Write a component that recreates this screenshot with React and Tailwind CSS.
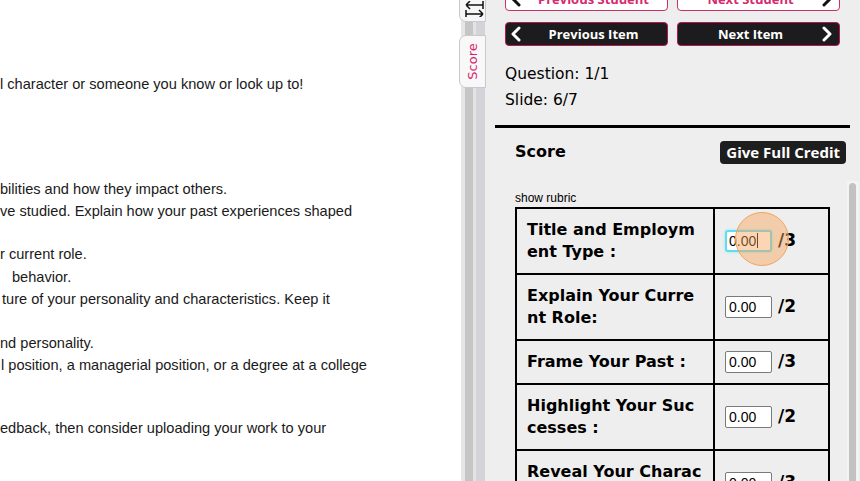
import React from 'react'

// Visible part of the assignment text (document is scrolled sideways)
const LEFT_LINES = [
  { text: 'l character or someone you know or look up to!', cls: 'mt-[73px]' },
  { text: 'bilities and how they impact others.', cls: 'mt-[83px]' },
  { text: 've studied. Explain how your past experiences shaped', cls: '' },
  { text: 'r current role.', cls: 'mt-[21px]' },
  { text: 'behavior.', cls: 'mt-px pl-[12px]' },
  { text: 'ture of your personality and characteristics. Keep it', cls: 'pl-[2px]' },
  { text: 'nd personality.', cls: 'mt-[22px]' },
  { text: 'l position, a managerial position, or a degree at a college', cls: 'pl-px' },
  { text: 'edback, then consider uploading your work to your', cls: 'mt-[41px]' },
]

const RUBRIC = [
  { lines: ['Title and Employm', 'ent Type :'], max: 3, focused: true },
  { lines: ['Explain Your Curre', 'nt Role:'], max: 2 },
  { lines: ['Frame Your Past :'], max: 3 },
  { lines: ['Highlight Your Suc', 'cesses :'], max: 2 },
  { lines: ['Reveal Your Charac', 'ter :'], max: 3 },
]

function Chevron({ dir = 'left', color = '#fff' }) {
  const pts = dir === 'left' ? '9,2 3,8 9,14' : '3,2 9,8 3,14'
  return (
    <svg width="12" height="16" viewBox="0 0 12 16" className="shrink-0">
      <polyline points={pts} fill="none" stroke={color} strokeWidth="3" strokeLinecap="round" strokeLinejoin="round" />
    </svg>
  )
}

function NavButton({ label, dir, dark }) {
  return (
    <div
      className={`flex h-[24px] w-[163px] items-center rounded-[4px] border ${
        dir === 'left' ? 'pl-[4px] pr-[2px]' : 'pl-[2px] pr-[6px]'
      } ${dark ? 'border-[#b3184f] bg-[#1c1b1d] text-white' : 'border-[#c9306b] bg-white text-[#d62a6f]'}`}
    >
      {dir === 'left' && <Chevron dir="left" color={dark ? '#fff' : '#111'} />}
      <span className="flex-1 text-center font-['Open_Sans',sans-serif] text-[13px] font-bold leading-none">{label}</span>
      {dir === 'right' && <Chevron dir="right" color={dark ? '#fff' : '#111'} />}
    </div>
  )
}

function ScoreInput({ focused }) {
  if (!focused) {
    return (
      <input
        readOnly
        value="0.00"
        className="h-[22px] w-[47px] rounded-[2px] border border-[#7a7a7a] bg-white px-[3px] font-['Liberation_Sans',Arial,sans-serif] text-[14px] text-black outline-none"
      />
    )
  }
  return (
    <div className="relative">
      <input
        readOnly
        value="0.00"
        className="h-[22px] w-[47px] rounded-[3px] border-2 border-[#62dcf0] bg-white px-[2px] font-['Liberation_Sans',Arial,sans-serif] text-[14px] text-black shadow-[0_0_3px_#8be9f7] outline-none"
      />
      <span className="pointer-events-none absolute left-[32px] top-[4px] h-[15px] w-px bg-black" />
      <span className="pointer-events-none absolute left-[10px] top-[-17px] h-[54px] w-[54px] rounded-full border-[1.5px] border-[#f0a562] bg-[#f8a559]/45" />
    </div>
  )
}

export default function App() {
  return (
    <div className="flex h-[481px] w-[860px] overflow-hidden bg-white">
      {/* Assignment text */}
      <div className="flex w-[459px] shrink-0 flex-col overflow-hidden whitespace-nowrap font-['Liberation_Sans',Arial,sans-serif] text-[14.6px] leading-[22px] text-[#1a1a1a]">
        {LEFT_LINES.map((l, i) => (
          <div key={i} className={l.cls}>{l.text}</div>
        ))}
      </div>

      {/* Splitter with side tabs */}
      <div className="relative flex w-[26px] shrink-0">
        <div className="w-[2px] bg-white" />
        <div className="w-[4px] bg-[#e6e6e6]" />
        <div className="w-[8px] bg-[#c5c5c5]" />
        <div className="w-[3px] bg-[#e3e3e3]" />
        <div className="w-[9px] bg-[#d3d3d9]" />

        <div className="absolute left-0 top-[-10px] flex h-[32px] w-[27px] items-end justify-center rounded-bl-[7px] border border-[#c9c9c9] bg-[#f6f6f6] pb-[4px]">
          <svg width="20" height="16" viewBox="0 0 20 16" className="translate-x-[2px]">
            <path d="M1 4 H18 M18 0 V8 M1 4 L5 0 M1 4 L5 8" fill="none" stroke="#111" strokeWidth="1.5" />
            <path d="M1 13 H18 M1 9 V17 M18 13 L14 9 M18 13 L14 17" fill="none" stroke="#111" strokeWidth="1.5" />
          </svg>
        </div>
        <div className="absolute left-0 top-[35px] flex h-[53px] w-[27px] items-center justify-center rounded-l-[7px] border border-[#c9c9c9] bg-[#f8f8f8]">
          <span className="-rotate-90 font-['DejaVu_Sans',sans-serif] text-[13px] leading-none text-[#d8246c]">Score</span>
        </div>
      </div>

      {/* Grading panel */}
      <div className="flex w-[375px] shrink-0 flex-col overflow-hidden bg-[#eeeeee] font-['DejaVu_Sans',sans-serif] text-black">
        <div className="mt-[-13px] flex gap-[9px] pl-[20px]">
          <NavButton label="Previous Student" dir="left" />
          <NavButton label="Next Student" dir="right" />
        </div>
        <div className="mt-[11px] flex gap-[9px] pl-[20px]">
          <NavButton label="Previous Item" dir="left" dark />
          <NavButton label="Next Item" dir="right" dark />
        </div>

        <div className="mt-[15px] pl-[20px] text-[15.5px] leading-[26px]">
          <div>Question: 1/1</div>
          <div>Slide: 6/7</div>
        </div>

        <div className="mx-[10px] mt-[12px] h-[3px] bg-black" />

        <div className="flex items-center justify-between pl-[30px] pr-[14px] pt-[12px]">
          <span className="text-[16px] font-bold">Score</span>
          <span className="flex h-[23px] items-center rounded-[4px] bg-[#1e1e1f] px-[6px] font-['Open_Sans',sans-serif] text-[15px] font-bold text-white">
            Give Full Credit
          </span>
        </div>

        <div className="mt-[17px] flex min-h-0 flex-1">
          <div className="flex-1 overflow-hidden pl-[30px] pt-[10px]">
            <div className="font-['Liberation_Sans',Arial,sans-serif] text-[12px] leading-[14px]">show rubric</div>
            <table className="mt-[2px] w-[315px] table-fixed border-collapse border-2 border-black">
              <colgroup>
                <col className="w-[198px]" />
                <col />
              </colgroup>
              <tbody>
                {RUBRIC.map((r) => (
                  <tr key={r.lines[0]}>
                    <td className="border-2 border-black px-[10px] py-[10px] align-middle text-[16px] font-semibold leading-[22px]">
                      {r.lines.map((ln) => (
                        <div key={ln} className="whitespace-nowrap">{ln}</div>
                      ))}
                    </td>
                    <td className="border-2 border-black pl-[10px] align-middle">
                      <div className="flex items-center gap-[6px]">
                        <ScoreInput focused={r.focused} />
                        <span className="text-[17px] font-semibold">/{r.max}</span>
                      </div>
                    </td>
                  </tr>
                ))}
              </tbody>
            </table>
          </div>
          <div className="mr-px w-[12px] bg-[#f3f3f3] pl-[2px] pt-[2px]">
            <div className="h-[400px] w-[7px] rounded-full bg-[#c2c2c2]" />
          </div>
        </div>
      </div>
    </div>
  )
}
